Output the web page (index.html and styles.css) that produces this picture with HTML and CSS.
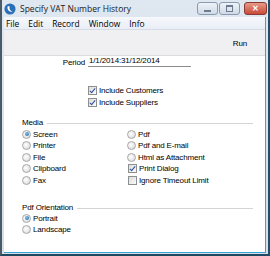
FILE: index.html
```html
<!DOCTYPE html>
<html lang="en">

<head>
    <meta charset="UTF-8">
    <title>Specify VAT Number History</title>
    <link rel="stylesheet" href="styles.css">
</head>

<body>
    <div class="window">
        <div class="titlebar">
            <svg class="app-icon" width="12" height="12" viewBox="0 0 13 13">
                <circle cx="6.5" cy="6.5" r="6" fill="#2a6fb8" />
                <path d="M4 3.5 C3 6.5 5 10 9.5 9.5 C7 8.8 5.5 7 6 3.5 Z" fill="#ffffff" />
            </svg>
            <span class="title">Specify VAT Number History</span>
            <div class="caption-btns">
                <div class="cbtn"><span class="min-glyph"></span></div>
                <div class="cbtn"><span class="max-glyph"></span></div>
                <div class="cbtn close">&#x2715;</div>
            </div>
        </div>
        <div class="client">
            <div class="menubar">
                <span>File</span>
                <span>Edit</span>
                <span>Record</span>
                <span>Window</span>
                <span>Info</span>
            </div>
            <div class="toolbar">
                <span class="run">Run</span>
            </div>
            <div class="content">
                <div class="period-row">
                    <label class="period-label">Period</label>
                    <span class="period-field">1/1/2014:31/12/2014</span>
                </div>

                <div class="includes">
                    <div class="opt"><span class="check on"></span>Include Customers</div>
                    <div class="opt"><span class="check on"></span>Include Suppliers</div>
                </div>

                <div class="group-head"><span>Media</span><span class="rule"></span></div>
                <div class="media-grid">
                    <div class="opt"><span class="radio on"></span>Screen</div>
                    <div class="opt"><span class="radio"></span>Pdf</div>
                    <div class="opt"><span class="radio"></span>Printer</div>
                    <div class="opt"><span class="radio"></span>Pdf and E-mail</div>
                    <div class="opt"><span class="radio"></span>File</div>
                    <div class="opt"><span class="radio"></span>Html as Attachment</div>
                    <div class="opt"><span class="radio"></span>Clipboard</div>
                    <div class="opt right-check"><span class="check on"></span>Print Dialog</div>
                    <div class="opt"><span class="radio"></span>Fax</div>
                    <div class="opt right-check"><span class="check"></span>Ignore Timeout Limit</div>
                </div>

                <div class="group-head orient"><span>Pdf Orientation</span><span class="rule"></span></div>
                <div class="opt"><span class="radio on"></span>Portrait</div>
                <div class="opt"><span class="radio"></span>Landscape</div>
            </div>
        </div>
    </div>
</body>

</html>
```

FILE: styles.css
```css
body {
    margin: 0;
    font-family: "Liberation Sans", Arial, sans-serif;
    font-size: 8px;
    letter-spacing: -0.15px;
    color: #000;
}

.window {
    width: 270px;
    height: 256px;
    box-sizing: border-box;
    display: flex;
    flex-direction: column;
    background: linear-gradient(#dfe7f0, #d6dfe9);
    border-left: 2px solid #4b5a66;
    border-right: 2px solid #1f4f6a;
    border-bottom: 2px solid #1d4a62;
}

.titlebar {
    height: 17px;
    display: flex;
    align-items: center;
    padding-left: 2px;
    position: relative;
}

.app-icon {
    margin-right: 4px;
}

.title {
    font-family: "Open Sans", sans-serif;
    font-size: 8.5px;
    letter-spacing: 0;
    color: #1a1a1a;
}

.caption-btns {
    position: absolute;
    right: 1px;
    top: 2px;
    display: flex;
    gap: 1px;
}

.cbtn {
    width: 21px;
    height: 13px;
    border: 1px solid #8a9bb0;
    border-radius: 3px;
    box-sizing: border-box;
    background: linear-gradient(#eef3f9, #cfd9e6);
    display: flex;
    align-items: center;
    justify-content: center;
}

.cbtn.close {
    width: 23px;
    margin-left: 3px;
    background: linear-gradient(#e89a88, #c84a38);
    border-color: #8a3a30;
    color: #fff;
    font-size: 8px;
    font-weight: bold;
}

.min-glyph {
    width: 7px;
    height: 2px;
    margin-top: 4px;
    background: #6b7a8c;
}

.max-glyph {
    width: 5px;
    height: 4px;
    border: 1px solid #6b7a8c;
    border-top-width: 2px;
}

.client {
    flex: 1;
    display: flex;
    flex-direction: column;
    margin: 0 2px 1px 2px;
    border-bottom: 1px solid #39a3d6;
    border-right: 1px solid #39a3d6;
    background: #fff;
}

.menubar {
    height: 12px;
    display: flex;
    align-items: center;
    padding-left: 2px;
    background: linear-gradient(#f6f8fc, #e9eef6);
    border-bottom: 1px solid #d6dde6;
    font-family: "Open Sans", sans-serif;
    font-size: 8.4px;
    letter-spacing: 0;
}

.menubar span {
    margin-right: 9px;
}

.toolbar {
    height: 23px;
    background: #f0f0f2;
    border-bottom: 1px solid #dcdcdc;
    display: flex;
    align-items: center;
    justify-content: flex-end;
    padding-right: 18px;
    padding-top: 2px;
}

.content {
    flex: 1;
    padding: 1px 0 0 18px;
}

.period-row {
    display: flex;
    align-items: flex-end;
    height: 10px;
}

.period-label {
    width: 63px;
    text-align: right;
    margin-right: 3px;
}

.period-field {
    width: 102px;
    border-bottom: 1px solid #8c8c8c;
    padding-left: 1px;
    line-height: 10px;
}

.includes {
    margin: 18px 0 0 66px;
}

.opt {
    display: flex;
    align-items: center;
    height: 11.4px;
    white-space: nowrap;
}

.check {
    width: 7px;
    height: 7px;
    border: 1px solid #8e8f8f;
    background: linear-gradient(135deg, #dcdcdc, #fbfbfb);
    margin-right: 2px;
    position: relative;
    flex: none;
}

.check.on::after {
    content: "";
    position: absolute;
    left: 2px;
    top: 0;
    width: 2px;
    height: 5px;
    border: solid #2a4f9a;
    border-width: 0 1.5px 1.5px 0;
    transform: rotate(40deg);
}

.radio {
    width: 7px;
    height: 7px;
    border-radius: 50%;
    border: 1px solid #a8a8a8;
    background: radial-gradient(circle at 40% 40%, #ffffff, #d4d4d4);
    margin-right: 2px;
    position: relative;
    flex: none;
}

.radio.on::after {
    content: "";
    position: absolute;
    left: 1.5px;
    top: 1.5px;
    width: 4px;
    height: 4px;
    border-radius: 50%;
    background: radial-gradient(circle at 40% 40%, #7fc4ee, #1c5d9c);
}

.group-head {
    display: flex;
    align-items: center;
    height: 11px;
    margin: 9px 0 1px 0;
}

.group-head .rule {
    flex: 1;
    height: 1px;
    background: #d4d4d4;
    margin: 3px 12px 0 4px;
}

.group-head.orient {
    margin-top: 16px;
    margin-bottom: 0;
}

.media-grid {
    display: grid;
    grid-template-columns: 105px auto;
}

.right-check {
    padding-left: 1px;
}
```
